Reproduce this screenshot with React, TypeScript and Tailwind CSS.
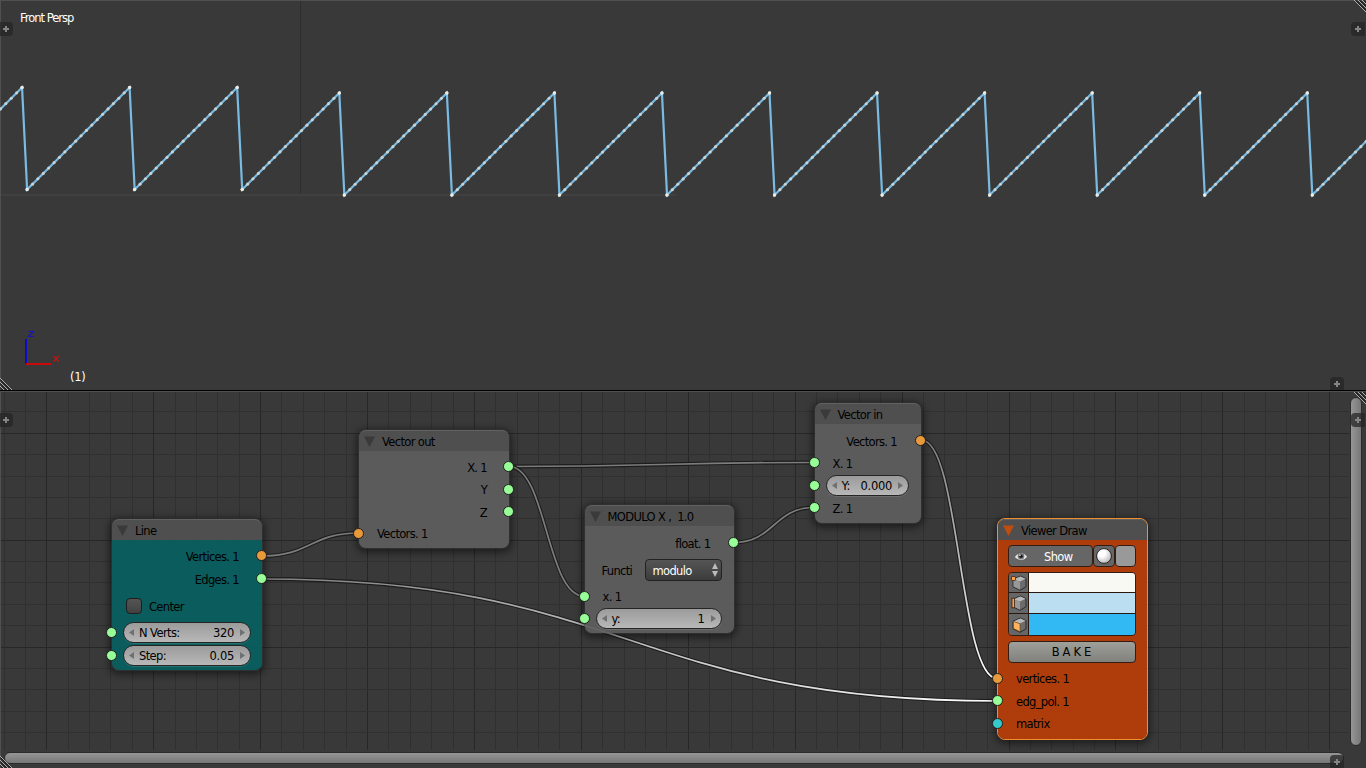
import React from "react";

type Point = [number, number];

const PERIOD = 107.55;

function buildWave() {
  const line: Point[] = [];
  const dots: Point[] = [];
  for (let k = -1; k < 13; k++) {
    const high = k < 2 ? 87.5 : 93;
    const low = high + 102;
    const shift = k >= 2 ? -5.4 : 0;
    const peakX = 129.6 + PERIOD * k + shift;
    const startX = (k <= 2 ? 27.1 : 21.7) + PERIOD * k;
    const startY = k <= 2 ? 189.5 : low;
    line.push([startX, startY], [peakX, high]);
    const steps = k === 2 ? 18 : 19;
    for (let i = 0; i <= steps; i++) {
      const t = i / steps;
      dots.push([startX + (peakX - startX) * t, startY + (high - startY) * t]);
    }
  }
  return { line, dots };
}

const wave = buildWave();

function range(start: number, step: number, end: number) {
  const out: number[] = [];
  for (let v = start; v < end; v += step) out.push(v);
  return out;
}

function Link({ from, to, a = "#7c7c7c", b = "#7c7c7c", id }: { from: Point; to: Point; a?: string; b?: string; id: string }) {
  const h = (to[0] - from[0]) / 2;
  const d = `M${from[0]} ${from[1]}C${from[0] + h} ${from[1]} ${to[0] - h} ${to[1]} ${to[0]} ${to[1]}`;
  return (
    <g fill="none">
      <linearGradient id={id} gradientUnits="userSpaceOnUse" x1={from[0]} y1={from[1]} x2={to[0]} y2={to[1]}>
        <stop offset="0" stopColor={a} />
        <stop offset="1" stopColor={b} />
      </linearGradient>
      <path d={d} stroke="#1c1c1c" strokeWidth="3.8" />
      <path d={d} stroke={`url(#${id})`} strokeWidth="1.7" />
    </g>
  );
}

function Canvas() {
  return (
    <svg className="absolute inset-0" width="1366" height="376" viewBox="0 392 1366 376">
      <g>
        {range(4, 21.383, 1349).map((x, i) => (
          <rect key={x} x={Math.round(x - 0.5)} y="392" width="1" height="358" fill={i % 5 === 2 ? "#272727" : "#303030"} />
        ))}
        {range(411.9, 21.38, 750).map((y, i) => (
          <rect key={y} x="1" y={Math.floor(y)} width="1348" height="1" fill={i % 5 === 1 ? "#272727" : "#303030"} />
        ))}
      </g>
      <Link id="l1" from={[262, 556]} to={[359, 533]} />
      <Link id="l2" from={[509, 466.5]} to={[814, 462.5]} />
      <Link id="l3" from={[509, 466.5]} to={[584, 596]} />
      <Link id="l4" from={[734, 542.5]} to={[814, 507.5]} />
      <Link id="l5" from={[922, 440.5]} to={[997, 678.5]} b="#ffffff" />
      <Link id="l6" from={[262, 579]} to={[997, 701]} b="#ffffff" />
    </svg>
  );
}

const ORANGE = "bg-[#e8993a]";
const GREEN = "bg-[#98ff98]";
const CYAN = "bg-[#35c9cb]";

function Socket({ color, side }: { color: string; side: "in" | "out" }) {
  return <i className={`size-[11px] shrink-0 rounded-full border border-[#202020] ${color} ${side === "in" ? "-ml-[6px]" : "-mr-[5px]"}`} />;
}

function Label({ children, className = "" }: { children: React.ReactNode; className?: string }) {
  return <p className={`shrink-0 pt-[2px] text-[11.5px] leading-[14px] tracking-[-0.66px] whitespace-pre ${className}`}>{children}</p>;
}

function Output({ name, color = GREEN, height = "h-[23px]", gap = "gap-[17px]" }: { name: string; color?: string; height?: string; gap?: string }) {
  return (
    <div className={`flex shrink-0 items-center justify-end ${gap} ${height}`}>
      <Label>{name}</Label>
      <Socket color={color} side="out" />
    </div>
  );
}

function Input({ name, color = GREEN, height = "h-[23px]" }: { name: string; color?: string; height?: string }) {
  return (
    <div className={`flex shrink-0 items-center gap-[13px] ${height}`}>
      <Socket color={color} side="in" />
      <Label>{name}</Label>
    </div>
  );
}

function NumberInput({ label, value, height = "h-[23px]", end = "pr-3" }: { label: string; value: string; height?: string; end?: string }) {
  return (
    <div className={`flex shrink-0 items-center gap-[6px] ${end} ${height}`}>
      <Socket color={GREEN} side="in" />
      <div className="flex h-[21px] grow items-center rounded-full border border-[#252525] bg-linear-to-b from-[#9b9b9b] to-[#b8b8b8] px-[5px] shadow-[0_1px_0_rgba(255,255,255,0.12)]">
        <svg width="5" height="7" viewBox="0 0 5 7"><path d="M5 0v7L0 3.500z" fill="#707070" /></svg>
        <span className="pt-px pl-[5px] text-[11.5px] leading-[14px] tracking-[-0.6px]">{label}</span>
        <span className="ml-auto pt-px pr-[6px] text-[11.5px] leading-[14px] tracking-[-0.3px]">{value}</span>
        <svg width="5" height="7" viewBox="0 0 5 7"><path d="M0 0v7l5-3.500z" fill="#707070" /></svg>
      </div>
    </div>
  );
}

function Node({ title, box, body, arrow = "#3a3a3a", edge = "border-[#2c2c2c]/60", children }: {
  title: string; box: string; body: string; arrow?: string; edge?: string; children: React.ReactNode;
}) {
  return (
    <section className={`absolute flex flex-col rounded-[8px] border shadow-[0_2px_7px_2px_rgba(0,0,0,0.45)] ${edge} ${box}`}>
      <header className="flex h-[21px] shrink-0 items-center gap-[7px] rounded-t-[7px] border-t border-white/10 bg-[#515151]/92 pl-[5px]">
        <svg width="11" height="11" viewBox="0 0 11 11" className="shrink-0"><path d="M0 .5h11L5.500 11z" fill={arrow} /></svg>
        <h2 className="pt-px text-[11.5px] leading-[14px] tracking-[-0.65px] whitespace-pre">{title}</h2>
      </header>
      <div className={`flex grow flex-col rounded-b-[7px] ${body}`}>{children}</div>
    </section>
  );
}

function Cube({ kind }: { kind: "vertex" | "edge" | "face" }) {
  return (
    <svg width="18" height="18" viewBox="0 0 18 18" className="shrink-0">
      <path d="M3 5.200 10.500 2 16 4.600v8.200L10 16.300l-7-3.500z" fill="#6c6c6c" stroke="#2b2b2b" strokeLinejoin="round" />
      <path d="M3.500 5.400 10.500 2.500l5 2.300L10 7.500z" fill="#b9b9b9" />
      <path d="M3.500 5.600 10 7.700v8L3.500 12.500z" fill={kind === "face" ? "#ffb35c" : "#989898"} stroke={kind === "face" ? "#6b3d12" : "none"} strokeWidth=".6" />
      {kind === "vertex" && <rect x="1.500" y="2.500" width="4" height="4" rx=".8" fill="#ffa646" stroke="#4b280e" strokeWidth=".9" />}
      {kind === "edge" && <rect x="2" y="4.200" width="2.400" height="9.600" fill="#ffb050" stroke="#3e2515" strokeWidth=".9" />}
    </svg>
  );
}

function ColorRow({ kind, swatch, height }: { kind: "vertex" | "edge" | "face"; swatch: string; height: string }) {
  return (
    <div className={`flex shrink-0 ${height}`}>
      <div className="flex w-5 items-center justify-center border-r border-[#2a1710] bg-[#666]"><Cube kind={kind} /></div>
      <div className={`flex-1 ${swatch}`} />
    </div>
  );
}

function PlusTab({ className }: { className: string }) {
  return (
    <div className={`absolute flex size-[14px] items-center justify-center bg-[#262626]/75 ${className}`}>
      <svg width="6" height="6" viewBox="0 0 6 6" className="shrink-0"><path d="M2 0h2v2h2v2H4v2H2V4H0V2h2z" fill="#858585" /></svg>
    </div>
  );
}

function Grip({ className }: { className: string }) {
  return (
    <svg className={`absolute ${className}`} width="12" height="12" viewBox="0 0 12 12">
      <path d="M0 0l12 12M4 0l8 8M8 0l4 4" stroke="#b0b0b0" />
      <path d="M1.400 0 12 10.600M5.400 0 12 6.600M9.400 0 12 2.600" stroke="#111" />
    </svg>
  );
}

function Viewport() {
  return (
    <main className="relative flex h-[391px] shrink-0 flex-col justify-between overflow-hidden border-b border-black bg-[#393939] pt-[11px] pb-[6px] text-[11.5px] leading-[14px] text-white">
      <svg className="absolute inset-0" width="1366" height="390" viewBox="0 0 1366 390">
        <rect width="1366" height="1" fill="#505050" />
        <rect width="1" height="390" fill="#505050" />
        <rect x="300" y="1" width="1" height="193" fill="#2e2e2e" />
        <rect x="1" y="194" width="675" height="2" fill="#404040" />
        <polyline points={wave.line.map((p) => p.join(",")).join(" ")} fill="none" stroke="#79bbe3" strokeWidth="2.200" />
        {wave.dots.map(([x, y], i) => (
          <circle key={i} cx={x} cy={y} r="1.600" fill="#d9dcd4" opacity=".8" />
        ))}
        {wave.line.map(([x, y], i) => (
          <circle key={i} cx={x} cy={y} r="1.700" fill="#ecece2" />
        ))}
        <path d="M26 339v25" stroke="#0a0ac8" strokeWidth="2" />
        <path d="M26 364h25.500" stroke="#c80a0a" strokeWidth="2" />
        <path d="M28.500 331.500h5l-5 5h5.500" stroke="#1616be" strokeWidth="1.200" fill="none" />
        <path d="M53.700 356l5 5.500M58.700 356l-5 5.500" stroke="#c41414" strokeWidth="1.200" />
      </svg>
      <p className="relative pl-5 tracking-[-1px]">Front Persp</p>
      <p className="relative pl-[70px] tracking-[-0.3px]">(1)</p>
      <PlusTab className="top-[22px] -left-px rounded-r-[4px]" />
      <PlusTab className="top-[22px] right-px rounded-l-[4px]" />
      <PlusTab className="right-[22px] -bottom-px rounded-t-[4px]" />
      <Grip className="top-0 right-0" />
      <Grip className="bottom-0 left-0 rotate-180" />
    </main>
  );
}

function ViewerControls() {
  return (
    <div className="flex flex-col gap-[5px] pt-[5px] pr-[11px] pl-[10px]">
      <div className="flex h-[22px] text-white">
        <div className="flex grow items-center gap-[16px] rounded-[4px] border border-[#321d15] bg-[#666] pl-[5px]">
          <svg width="14" height="11" viewBox="0 0 14 11" className="shrink-0">
            <path d="M.3 6Q7-3 13.700 6 7 13 .3 6z" fill="#e8e8e8" stroke="#3a3a3a" strokeWidth=".6" />
            <circle cx="7" cy="5.200" r="3.300" fill="#777" />
            <circle cx="7" cy="5.200" r="1.700" fill="#151515" />
            <circle cx="6" cy="4.200" r=".8" fill="#fff" />
          </svg>
          <Label>Show</Label>
        </div>
        <div className="flex w-[22px] items-center justify-center rounded-[4px] border border-[#321d15] bg-[#666]">
          <svg width="16" height="16" viewBox="0 0 16 16" className="shrink-0">
            <radialGradient id="ball" cx=".35" cy=".3" r=".8"><stop offset=".3" stopColor="#fff" /><stop offset="1" stopColor="#b0b0b0" /></radialGradient>
            <circle cx="8" cy="8" r="7.400" fill="url(#ball)" stroke="#222" />
          </svg>
        </div>
        <div className="w-[21px] rounded-[4px] border border-[#321d15] bg-[#999]" />
      </div>
      <div className="flex flex-col divide-y divide-[#2a1710] overflow-hidden rounded-[4px] border border-[#321d15]">
        <ColorRow kind="vertex" swatch="bg-[#f8f9f3]" height="h-[20px]" />
        <ColorRow kind="edge" swatch="bg-[#bbdff1]" height="h-[21px]" />
        <ColorRow kind="face" swatch="bg-[#32b8f3]" height="h-[21px]" />
      </div>
      <div className="flex h-[22px] items-center justify-center rounded-[4px] border border-[#321d15] bg-linear-to-b from-[#a0a09b] to-[#80807c] pt-px pl-[2px] text-[11.5px] tracking-[3px]">BAKE</div>
    </div>
  );
}

export default function App() {
  return (
    <div className="flex h-[768px] w-[1366px] flex-col overflow-hidden bg-[#393939] font-['DejaVu_Sans',sans-serif] text-black">
      <Viewport />
      <section className="relative flex h-[377px] flex-col gap-[3px] overflow-hidden border-t border-[#505050] bg-[#393939] pb-[4px] shadow-[inset_1px_0_0_#505050]">
        <Canvas />
        <div className="flex grow pr-1">
          <div className="relative grow">
            <Node title="Line" box="left-[111px] top-[126px] w-[152px] h-[153px]" body="bg-[#085e5e]/95 pt-[4px]">
              <Output name="Vertices. 1" color={ORANGE} />
              <Output name="Edges. 1" />
              <div className="flex h-[31px] shrink-0 items-center gap-[7px] pl-[14px]">
                <span className="size-4 rounded-[4px] border border-[#1d1d1d] bg-linear-to-b from-[#555] to-[#414141]" />
                <Label>Center</Label>
              </div>
              <NumberInput label="N Verts:" value="320" end="pr-[11px]" />
              <NumberInput label="Step:" value="0.05" end="pr-[11px]" />
            </Node>

            <Node title="Vector out" box="left-[358px] top-[37px] w-[152px] h-[120px]" body="bg-[#5e5e5e]/92 pt-[4px]">
              <Output name="X. 1" gap="gap-[16px]" />
              <Output name="Y" gap="gap-[16px]" height="h-[22px]" />
              <Output name="Z" gap="gap-[16px]" />
              <Input name="Vectors. 1" color={ORANGE} height="h-5" />
            </Node>

            <Node title="MODULO X ,  1.0" box="left-[583.5px] top-[112px] w-[151px] h-[130px]" body="bg-[#5e5e5e]/92 pt-[5px]">
              <Output name="float. 1" />
              <div className="flex h-[31px] shrink-0 items-center justify-between pr-3 pl-[17px]">
                <Label>Functi</Label>
                <div className="flex h-[22px] w-[77px] items-center justify-between rounded-[4px] border border-[#222] bg-linear-to-b from-[#555] to-[#3c3c3c] pr-[3px] pl-[7px] text-white">
                  <Label>modulo</Label>
                  <svg width="6" height="14" viewBox="0 0 6 14"><path d="M0 6l3-6 3 6zM0 8h6l-3 6z" fill="#bbb" /></svg>
                </div>
              </div>
              <Input name="x. 1" height="h-[22px]" />
              <NumberInput label="y:" value="1" />
            </Node>

            <Node title="Vector in" box="left-[813.5px] top-[10px] w-[108.500px] h-[122px]" body="bg-[#5e5e5e]/92 pt-[5px]">
              <Output name="Vectors. 1" color={ORANGE} gap="gap-[18px]" />
              <Input name="X. 1" height="h-[21px]" />
              <NumberInput label="Y:" value="0.000" height="h-6" />
              <Input name="Z. 1" height="h-[21px]" />
            </Node>

            <Node title="Viewer Draw" box="left-[997px] top-[126px] w-[151px] h-[222px]" body="bg-[#b33d0a]/97" arrow="#bf4d10" edge="border-[#ef9030]">
              <ViewerControls />
              <div className="flex flex-col pt-[4px]">
                <Input name="vertices. 1" color={ORANGE} height="h-[22px]" />
                <Input name="edg_pol. 1" />
                <Input name="matrix" color={CYAN} height="h-[22px]" />
              </div>
            </Node>
          </div>
          <div className="flex w-3 shrink-0 flex-col pt-[5px] pb-[3px]">
            <div className="grow rounded-full border border-[#2b2b2b] bg-linear-to-r from-[#969696] to-[#777]" />
          </div>
        </div>
        <div className="relative flex h-3 shrink-0 pr-[22px] pl-1">
          <div className="grow rounded-full border border-[#2b2b2b] bg-linear-to-b from-[#969696] to-[#777]" />
        </div>
        <PlusTab className="top-[21px] -left-px rounded-r-[4px]" />
        <PlusTab className="top-[21px] right-px rounded-l-[4px]" />
        <PlusTab className="right-[22px] -bottom-px rounded-t-[4px]" />
        <Grip className="top-0 right-0" />
        <Grip className="bottom-0 left-0 rotate-180" />
      </section>
    </div>
  );
}
